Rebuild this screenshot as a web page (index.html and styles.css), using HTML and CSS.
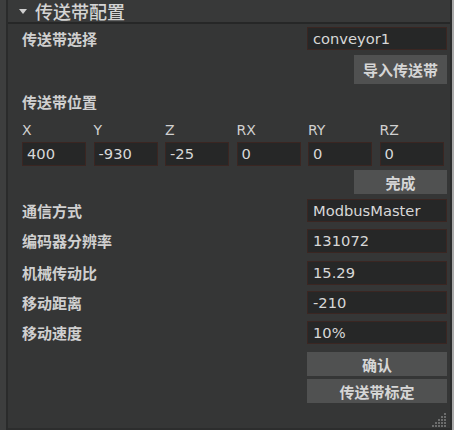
FILE: index.html
```html
<!DOCTYPE html>
<html>
<head>
<meta charset="utf-8">
<link rel="stylesheet" href="styles.css">
</head>
<body>
<div class="window">
  <div class="lstrip"></div>
  <div class="panel">
    <div class="header">
      <span class="tri"></span>
      <span class="title">传送带配置</span>
    </div>
    <div class="content">
      <div class="row r-select">
        <span class="label">传送带选择</span>
        <div class="field">conveyor1</div>
      </div>
      <div class="btnrow r-import">
        <div class="btn btn-import">导入传送带</div>
      </div>
      <div class="label r-poslabel">传送带位置</div>
      <div class="axes r-axes">
        <span class="axis">X</span>
        <span class="axis">Y</span>
        <span class="axis">Z</span>
        <span class="axis">RX</span>
        <span class="axis">RY</span>
        <span class="axis">RZ</span>
      </div>
      <div class="axes r-axinputs">
        <div class="field small">400</div>
        <div class="field small">-930</div>
        <div class="field small">-25</div>
        <div class="field small">0</div>
        <div class="field small">0</div>
        <div class="field small">0</div>
      </div>
      <div class="btnrow r-done">
        <div class="btn btn-done">完成</div>
      </div>
      <div class="row r-comm">
        <span class="label">通信方式</span>
        <div class="field">ModbusMaster</div>
      </div>
      <div class="row r-enc">
        <span class="label">编码器分辨率</span>
        <div class="field">131072</div>
      </div>
      <div class="row r-ratio">
        <span class="label">机械传动比</span>
        <div class="field">15.29</div>
      </div>
      <div class="row r-dist">
        <span class="label">移动距离</span>
        <div class="field">-210</div>
      </div>
      <div class="row r-speed">
        <span class="label">移动速度</span>
        <div class="field">10%</div>
      </div>
      <div class="btnrow r-ok">
        <div class="btn btn-wide">确认</div>
      </div>
      <div class="btnrow r-calib">
        <div class="btn btn-wide">传送带标定</div>
      </div>
      <div class="griprow">
        <svg class="grip" width="15" height="15" viewBox="0 0 15 15">
          <g fill="#6c6d6d">
            <rect x="12" y="0" width="2" height="2"/>
            <rect x="9" y="3" width="2" height="2"/><rect x="12" y="3" width="2" height="2"/>
            <rect x="6" y="6" width="2" height="2"/><rect x="9" y="6" width="2" height="2"/><rect x="12" y="6" width="2" height="2"/>
            <rect x="3" y="9" width="2" height="2"/><rect x="6" y="9" width="2" height="2"/><rect x="9" y="9" width="2" height="2"/><rect x="12" y="9" width="2" height="2"/>
            <rect x="0" y="12" width="2" height="2"/><rect x="3" y="12" width="2" height="2"/><rect x="6" y="12" width="2" height="2"/><rect x="9" y="12" width="2" height="2"/><rect x="12" y="12" width="2" height="2"/>
          </g>
        </svg>
      </div>
    </div>
  </div>
  <div class="rstrip"></div>
</div>
</body>
</html>
```
FILE: styles.css
```css
html, body {
  margin: 0;
  padding: 0;
}
body {
  width: 454px;
  height: 430px;
  overflow: hidden;
  background: #353636;
  font-family: "DejaVu Sans", "Noto Sans CJK SC", sans-serif;
  color: #d2d2d2;
}
.window {
  display: flex;
  height: 430px;
}
.lstrip {
  width: 6px;
  background: #3d3e3e;
  border-right: 2px solid #2a2b2b;
}
.rstrip {
  width: 2px;
  background: #a9a9a9;
  border-left: 2px solid #2b2c2c;
}
.panel {
  flex: 1;
  display: flex;
  flex-direction: column;
  border-bottom: 2px solid #2c2d2d;
}
.header {
  height: 22px;
  border-bottom: 2px solid #262727;
  background: #383939;
  display: flex;
  align-items: center;
  padding-left: 11px;
}
.tri {
  width: 0;
  height: 0;
  border-left: 4px solid transparent;
  border-right: 4px solid transparent;
  border-top: 5px solid #cfcfcf;
  margin-top: 1px;
}
.title {
  margin-left: 8px;
  font-family: "Noto Sans CJK SC", sans-serif;
  font-size: 18px;
  font-weight: 500;
  line-height: 22px;
  color: #d4d4d4;
}
.content {
  flex: 1;
  display: flex;
  flex-direction: column;
  padding: 0 3px 0 14px;
}
.row {
  display: flex;
  justify-content: space-between;
  align-items: center;
  height: 24px;
}
.label {
  font-family: "Noto Sans CJK SC", sans-serif;
  font-size: 15px;
  font-weight: 700;
  line-height: 20px;
  color: #d0d0d0;
}
.field {
  box-sizing: border-box;
  width: 140px;
  height: 100%;
  background: #262727;
  border: 1px solid #3a2622;
  padding-left: 5px;
  font-family: "DejaVu Sans", sans-serif;
  font-size: 14.7px;
  line-height: 21px;
  color: #d8d8d8;
  white-space: nowrap;
  overflow: hidden;
}
.field.small {
  width: 64px;
  padding-left: 4px;
}
.btnrow {
  display: flex;
  justify-content: flex-end;
}
.btn {
  background: #505151;
  font-family: "Noto Sans CJK SC", sans-serif;
  font-size: 15px;
  font-weight: 700;
  color: #d6d6d6;
  display: flex;
  align-items: center;
  justify-content: center;
}
.btn-import { width: 93px; height: 29px; }
.btn-done { width: 93px; height: 24px; }
.btn-wide { width: 140px; height: 24px; }
.axes {
  display: grid;
  grid-template-columns: repeat(6, 64px);
  column-gap: 7.5px;
}
.axis {
  font-family: "DejaVu Sans", sans-serif;
  font-size: 14px;
  line-height: 16px;
  color: #d0d0d0;
}
.r-axinputs { height: 24px; }
.r-select { margin-top: 3px; height: 23px; }
.r-import { margin-top: 5px; }
.r-poslabel { margin-top: 8px; }
.r-axes { margin-top: 10px; }
.r-axinputs { margin-top: 4px; }
.r-done { margin-top: 4px; }
.r-comm { margin-top: 5px; height: 23px; }
.r-enc { margin-top: 7px; }
.r-ratio { margin-top: 8px; }
.r-dist { margin-top: 6px; height: 23px; }
.r-speed { margin-top: 7px; height: 23px; }
.r-ok { margin-top: 8px; }
.r-calib { margin-top: 3px; }
.griprow {
  margin-top: auto;
  display: flex;
  justify-content: flex-end;
  padding-bottom: 0;
  margin-right: 0;
}
.grip { display: block; }
```
